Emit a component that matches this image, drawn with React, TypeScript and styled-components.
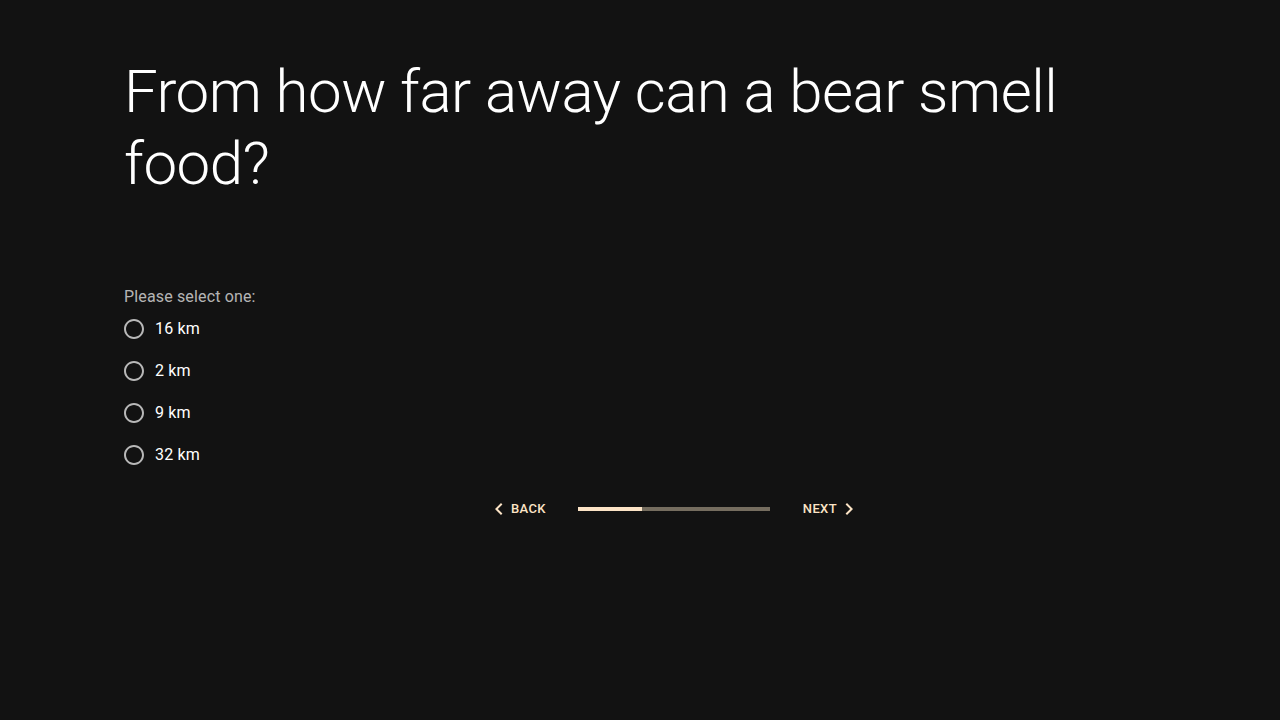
import React, { useState } from "react";
import styled, { createGlobalStyle } from "styled-components";

const Global = createGlobalStyle`
  html, body { margin: 0; padding: 0; background: #121212; }
  body { font-family: Roboto, "Liberation Sans", sans-serif; color: #fff; }
  * { box-sizing: border-box; }
`;

const Page = styled.main`
  min-height: 720px;
  background: #121212;
  padding: 56px 56px 0 124px;
`;

const Title = styled.h1`
  margin: 0;
  max-width: 1000px;
  font-family: Roboto, "Liberation Sans", sans-serif;
  font-weight: 300;
  font-size: 60px;
  line-height: 72px;
  letter-spacing: -0.00833em;
  color: #fff;
`;

const Fieldset = styled.fieldset`
  margin: 85px 0 0 0;
  padding: 0;
  border: 0;
  display: flex;
  flex-direction: column;
`;

const Legend = styled.legend`
  padding: 0;
  font-size: 16px;
  line-height: 23px;
  letter-spacing: 0.00938em;
  color: rgba(255, 255, 255, 0.7);
  float: left;
`;

const Group = styled.div`
  display: flex;
  flex-direction: column;
`;

const Option = styled.label`
  display: flex;
  align-items: center;
  height: 42px;
  margin-left: -11px;
  cursor: pointer;
`;

const RadioBox = styled.span`
  display: inline-flex;
  padding: 9px;
  color: rgba(255, 255, 255, 0.7);
  input { display: none; }
`;

const OptionText = styled.span`
  font-size: 16px;
  line-height: 24px;
  letter-spacing: 0.00938em;
  color: #fff;
`;

const Stepper = styled.div`
  width: 400px;
  margin: 9px 0 0 350px;
  padding: 8px;
  display: flex;
  align-items: center;
  justify-content: space-between;
`;

const StepButton = styled.button`
  display: inline-flex;
  align-items: center;
  background: transparent;
  border: 0;
  padding: 4px 5px;
  font-family: Roboto, "Liberation Sans", sans-serif;
  font-weight: 500;
  font-size: 13px;
  line-height: 22px;
  letter-spacing: 0.02857em;
  text-transform: uppercase;
  color: #fce4c6;
  cursor: pointer;
  svg { width: 24px; height: 24px; fill: currentColor; }
`;

const Track = styled.div`
  width: 50%;
  height: 4px;
  background: #756d5f;
  overflow: hidden;
`;

const Fill = styled.div`
  height: 100%;
  background: #fce4c6;
`;

const Radio = ({ checked }: { checked: boolean }) => (
  <svg width="24" height="24" viewBox="0 0 24 24" fill="currentColor">
    <path d="M12 2C6.48 2 2 6.48 2 12s4.48 10 10 10 10-4.48 10-10S17.520 2 12 2zm0 18c-4.42 0-8-3.580-8-8s3.58-8 8-8 8 3.58 8 8-3.58 8-8 8z" />
    {checked && <circle cx="12" cy="12" r="5" />}
  </svg>
);

const options = ["16 km", "2 km", "9 km", "32 km"];

export default function App() {
  const [value, setValue] = useState<string | null>(null);
  const progress = 100 / 3;
  return (
    <>
      <Global />
      <Page>
        <Title>From how far away can a bear smell food?</Title>
        <Fieldset>
          <Legend>Please select one:</Legend>
          <Group>
            {options.map((o) => (
              <Option key={o}>
                <RadioBox>
                  <input type="radio" name="q" checked={value === o} onChange={() => setValue(o)} />
                  <Radio checked={value === o} />
                </RadioBox>
                <OptionText>{o}</OptionText>
              </Option>
            ))}
          </Group>
        </Fieldset>
        <Stepper>
          <StepButton>
            <svg viewBox="0 0 24 24"><path d="M15.41 16.59 10.83 12l4.58-4.59L14 6l-6 6 6 6z" /></svg>
            Back
          </StepButton>
          <Track>
            <Fill style={{ width: `${progress}%` }} />
          </Track>
          <StepButton>
            Next
            <svg viewBox="0 0 24 24"><path d="M8.59 16.59 13.17 12 8.59 7.41 10 6l6 6-6 6z" /></svg>
          </StepButton>
        </Stepper>
      </Page>
    </>
  );
}
